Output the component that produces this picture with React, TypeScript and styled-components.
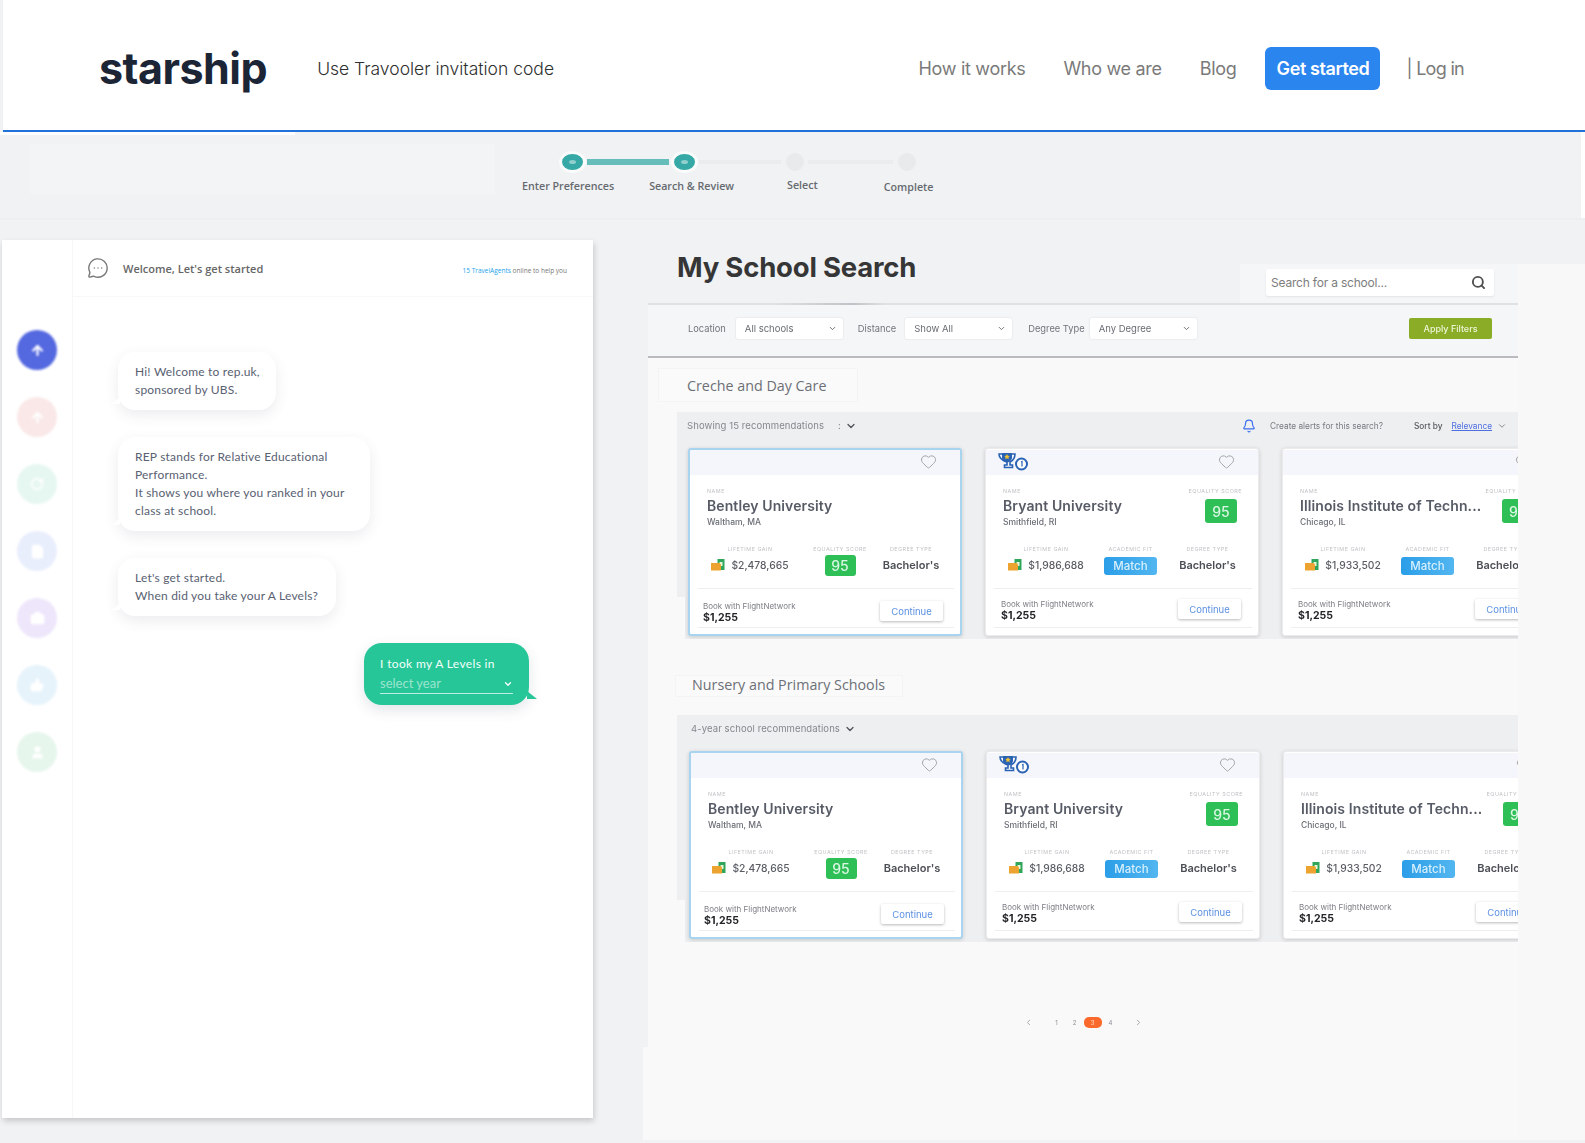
import React from 'react';
import styled, { createGlobalStyle } from 'styled-components';
import {
  ArrowUp,
  Bell,
  Briefcase,
  ChevronDown,
  ChevronLeft,
  ChevronRight,
  FileText,
  Heart,
  MessageCircleMore,
  RotateCw,
  Search,
  ThumbsUp,
  User,
} from 'lucide-react';

const GlobalStyle = createGlobalStyle`
  html, body {
    margin: 0;
    padding: 0;
    background: #ffffff;
    font-family: 'Inter', 'Liberation Sans', sans-serif;
  }
  * {
    box-sizing: border-box;
  }
`;

const Page = styled.div`
  width: 1585px;
  height: 1143px;
  display: flex;
  flex-direction: column;
  overflow: hidden;
  background: #f1f2f4;
`;

/* top navigation */
const Header = styled.header`
  height: 132px;
  flex: none;
  margin-left: 3px;
  padding: 6px 121px 0 96px;
  display: flex;
  align-items: center;
  background: #ffffff;
  border-bottom: 2px solid #2271d8;
`;

const Logo = styled.div`
  font-size: 43px;
  line-height: 48px;
  font-weight: 700;
  letter-spacing: -0.5px;
  color: #1c2536;
`;

const Tagline = styled.div`
  margin-left: 50px;
  font-size: 17.5px;
  font-weight: 300;
  color: #2f2f2f;
`;

const Nav = styled.nav`
  margin-left: auto;
  display: flex;
  align-items: center;
`;

const NavLink = styled.span`
  margin-left: 38px;
  font-size: 18px;
  letter-spacing: -0.3px;
  color: #7a7a7a;
  white-space: nowrap;
`;

const GetStarted = styled.button`
  width: 115px;
  height: 43px;
  margin-left: 29px;
  border: none;
  border-radius: 6px;
  background: #2a85ef;
  color: #ffffff;
  font-family: inherit;
  font-size: 18px;
  font-weight: 600;
  letter-spacing: -0.4px;
`;

const LogIn = styled(NavLink)`
  margin-left: 26px;
  letter-spacing: -0.7px;
`;

/* stepper */
const StepBar = styled.div`
  height: 88px;
  flex: none;
  padding-top: 19px;
  border-bottom: 2px solid #eeeff1;
  background:
    linear-gradient(#ffffff, #ffffff) left top / 295px 3px no-repeat,
    linear-gradient(#ffffff, #ffffff) right top / 4px 100% no-repeat,
    linear-gradient(#f3f4f6, #f3f4f6) 30px 12px / 465px 50px no-repeat;
`;

const StepTrack = styled.div`
  height: 22px;
  padding-left: 562px;
  display: flex;
  align-items: center;
`;

const StepDot = styled.div<{ $done?: boolean }>`
  flex: none;
  width: ${(p) => (p.$done ? '21px' : '18px')};
  height: ${(p) => (p.$done ? '16px' : '18px')};
  border-radius: 50%;
  background: ${(p) => (p.$done ? '#36a9a6' : '#e9eaec')};
  box-shadow: ${(p) => (p.$done ? '0 0 0 3px #fafbfb' : 'none')};
  filter: blur(0.5px);
  display: flex;
  align-items: center;
  justify-content: center;

  &::after {
    content: '';
    width: 7px;
    height: 4px;
    border-radius: 50%;
    background: ${(p) => (p.$done ? '#8fd0cd' : 'transparent')};
  }
`;

const StepLine = styled.div<{ $done?: boolean; $width: number }>`
  flex: none;
  width: ${(p) => p.$width}px;
  margin: 0 5px 0 4px;
  height: ${(p) => (p.$done ? '6px' : '4px')};
  background: ${(p) => (p.$done ? '#66bdb9' : '#ebecee')};
  filter: blur(0.5px);
`;

const StepLabels = styled.div`
  display: flex;
  align-items: flex-start;
  padding-left: 522px;
`;

const StepLabel = styled.span<{ $left: number; $top: number }>`
  margin-left: ${(p) => p.$left}px;
  margin-top: ${(p) => p.$top}px;
  font-family: 'Open Sans', 'Liberation Sans', sans-serif;
  font-size: 10.7px;
  line-height: 14px;
  font-weight: 600;
  color: #666a70;
  white-space: nowrap;
`;

/* body columns */
const Main = styled.div`
  flex: 1;
  min-height: 0;
  display: flex;
  padding-bottom: 3px;
`;

const LeftColumn = styled.div`
  flex: none;
  width: 648px;
  padding: 20px 0 0 2px;
`;

const ChatPanel = styled.section`
  width: 591px;
  height: 878px;
  display: flex;
  background: #ffffff;
  box-shadow: 1px 3px 6px rgba(0, 0, 0, 0.18);
`;

const Sidebar = styled.aside`
  flex: none;
  width: 71px;
  padding-top: 90px;
  display: flex;
  flex-direction: column;
  align-items: center;
  gap: 27px;
  border-right: 1px solid #f7f7f8;
`;

const SideStep = styled.div<{ $color: string }>`
  width: 40px;
  height: 40px;
  border-radius: 50%;
  background: ${(p) => p.$color};
  color: #ffffff;
  filter: blur(0.8px);
  display: flex;
  align-items: center;
  justify-content: center;
`;

const ChatBody = styled.div`
  flex: 1;
  display: flex;
  flex-direction: column;
`;

const ChatHeader = styled.div`
  height: 57px;
  flex: none;
  padding: 0 26px 0 14px;
  display: flex;
  align-items: center;
  gap: 14px;
  border-bottom: 1px solid #f8f8f9;
  color: #777777;
`;

const ChatTitle = styled.span`
  font-family: 'Open Sans', 'Liberation Sans', sans-serif;
  font-size: 11px;
  font-weight: 600;
  color: #666666;
`;

const OnlineNote = styled.span`
  margin-left: auto;
  margin-top: 4px;
  font-family: 'Open Sans', 'Liberation Sans', sans-serif;
  font-size: 6.5px;
  color: #777777;

  b {
    font-weight: 400;
    color: #1ca4ea;
  }
`;

const Messages = styled.div`
  padding: 55px 0 0 45px;
  display: flex;
  flex-direction: column;
  align-items: flex-start;
  gap: 27px;
`;

const Bubble = styled.div<{ $width: number }>`
  position: relative;
  width: ${(p) => p.$width}px;
  padding: 11px 0 11px 17px;
  border-radius: 17px;
  background: #ffffff;
  box-shadow: 0 5px 14px rgba(60, 70, 90, 0.1);
  font-family: 'Lato', 'Liberation Sans', sans-serif;
  font-size: 12px;
  line-height: 18px;
  letter-spacing: 0.2px;
  color: #596172;
  white-space: nowrap;

  &::after {
    content: '';
    position: absolute;
    left: -6px;
    bottom: 6px;
    border-left: 8px solid transparent;
    border-bottom: 7px solid #ffffff;
  }
`;

const ReplyBubble = styled.div`
  position: relative;
  width: 165px;
  height: 62px;
  margin-left: 246px;
  padding: 12px 16px 0;
  border-radius: 18px;
  background: #26c698;
  box-shadow: 0 5px 14px rgba(60, 70, 90, 0.14);
  font-family: 'Lato', 'Liberation Sans', sans-serif;
  font-size: 12px;
  line-height: 17px;
  letter-spacing: 0.35px;
  color: #f4fffb;

  &::after {
    content: '';
    position: absolute;
    right: -8px;
    bottom: 6px;
    border-right: 10px solid transparent;
    border-bottom: 8px solid #26c698;
  }
`;

const YearSelect = styled.div`
  height: 20px;
  margin-top: 2px;
  display: flex;
  align-items: center;
  justify-content: space-between;
  border-bottom: 1px solid rgba(255, 255, 255, 0.7);
  color: rgba(255, 255, 255, 0.55);
  font-size: 13px;
  letter-spacing: 0;
`;

const RightColumn = styled.div`
  flex: 1;
  min-width: 0;
  display: flex;
`;

const SearchColumn = styled.section`
  flex: none;
  width: 870px;
  display: flex;
  flex-direction: column;
`;

const Gutter = styled.div`
  flex: 1;
  margin-top: 44px;
  background: #f8f8f9;
`;

const TitleRow = styled.div`
  position: relative;
  height: 85px;
  flex: none;
  padding-left: 29px;
  display: flex;
  align-items: flex-end;
  justify-content: space-between;
  border-bottom: 2px solid #dfe1e4;

  &::after {
    content: '';
    position: absolute;
    left: 127px;
    bottom: -2px;
    width: 110px;
    height: 2px;
    background: linear-gradient(90deg, #dfe1e4, #bfc2c6 70%, #dfe1e4);
  }
`;

const PageTitle = styled.h1`
  margin: 0 0 19px;
  font-size: 27.5px;
  line-height: 34px;
  font-weight: 700;
  letter-spacing: -0.2px;
  color: #363636;
`;

const SearchDock = styled.div`
  width: 278px;
  height: 39px;
  padding: 5px 24px 7px 26px;
  background: #f5f6f8;
`;

const SearchBox = styled.div`
  height: 27px;
  padding: 0 8px 0 5px;
  display: flex;
  align-items: center;
  justify-content: space-between;
  border-radius: 2px;
  background: #ffffff;
  box-shadow: 0 1px 2px rgba(0, 0, 0, 0.08);
  font-size: 12px;
  letter-spacing: -0.2px;
  color: #7d7d7d;
`;

const FilterRow = styled.div`
  height: 53px;
  flex: none;
  padding: 0 26px 4px 40px;
  display: flex;
  align-items: center;
  background: #f5f6f8;
  border-bottom: 2px solid #b9bbbe;
  filter: blur(0.3px);
`;

const FilterLabel = styled.span<{ $gap?: number }>`
  margin-left: ${(p) => p.$gap ?? 0}px;
  font-size: 9.3px;
  color: #70747a;
  white-space: nowrap;
`;

const FilterSelect = styled.div<{ $gap: number }>`
  width: 107px;
  height: 21px;
  margin-left: ${(p) => p.$gap}px;
  padding: 0 6px 0 9px;
  display: flex;
  align-items: center;
  justify-content: space-between;
  border-radius: 2px;
  background: #ffffff;
  box-shadow: 0 0 2px rgba(0, 0, 0, 0.14);
  font-size: 9.5px;
  color: #696d73;
`;

const ApplyButton = styled.button`
  width: 83px;
  height: 21px;
  margin-left: auto;
  border: none;
  border-radius: 2px;
  background: #8aac26;
  color: #eef5d6;
  font-family: inherit;
  font-size: 9px;
  font-weight: 500;
`;

const Results = styled.div`
  flex: 1;
  min-height: 0;
  display: flex;
  flex-direction: column;
  background: #f9f9fa;
`;

const SectionTitle = styled.h2<{ $left: number; $pad: number; $top: number; $height: number; $width: number; $lift: number }>`
  width: ${(p) => p.$width}px;
  height: ${(p) => p.$height}px;
  margin: ${(p) => p.$top}px 0 0 ${(p) => p.$left}px;
  padding: 0 0 ${(p) => p.$lift}px ${(p) => p.$pad}px;
  display: flex;
  align-items: center;
  background: #fafafb;
  border: 1px solid #f4f4f6;
  font-family: 'Open Sans', 'Liberation Sans', sans-serif;
  font-size: 14.3px;
  font-weight: 400;
  color: #6d7076;
  white-space: nowrap;
`;

const RecBlock = styled.div<{ $top: number }>`
  margin: ${(p) => p.$top}px 0 0 29px;
  background: linear-gradient(#eeeff1, #eeeff1) left top / 8px 185px no-repeat;
  filter: blur(0.45px);
`;

const SortBand = styled.div`
  height: 27px;
  padding: 0 11px 0 10px;
  display: flex;
  align-items: center;
  background: #eeeff1;
  font-size: 9.5px;
  color: #84878d;
`;

const BandCount = styled.span<{ $pad: number }>`
  padding-left: ${(p) => p.$pad}px;
  white-space: nowrap;
  letter-spacing: 0.1px;
`;

const BandChevron = styled.span`
  margin-left: 4px;
  display: flex;
  color: #4d5157;
`;

const AlertGroup = styled.div`
  margin-left: auto;
  display: flex;
  align-items: center;
  color: #777a80;
  font-size: 8.3px;
`;

const AlertText = styled.span`
  margin: 0 31px 0 14px;
  white-space: nowrap;
`;

const SortLabel = styled.span`
  color: #55585e;
  font-weight: 500;
  white-space: nowrap;
`;

const SortValue = styled.span`
  margin: 0 5px 0 9px;
  color: #4e6fe0;
  text-decoration: underline;
  white-space: nowrap;
`;

const CardWell = styled.div<{ $pad: number }>`
  margin-left: 8px;
  padding: 9px 0 3px ${(p) => p.$pad}px;
  display: flex;
  gap: 23px;
  overflow: hidden;
  background: #eeeff1;
`;

const Card = styled.article<{ $featured?: boolean }>`
  flex: none;
  width: 274px;
  height: 188px;
  padding-top: ${(p) => (p.$featured ? '0' : '1px')};
  border: ${(p) => (p.$featured ? '2px solid #a9d4f0' : '1px solid #ebebeb')};
  border-radius: 3px;
  background: #ffffff;
  box-shadow: 0 1px 4px rgba(0, 0, 0, 0.16);
  display: flex;
  flex-direction: column;
`;

const CardHead = styled.div`
  height: 25px;
  flex: none;
  padding: 0 23px 3px 12px;
  display: flex;
  align-items: center;
  justify-content: space-between;
  background: #f4f6fb;
  color: #9a9a9a;
`;

const CardTop = styled.div`
  height: 41px;
  flex: none;
  margin-top: 12px;
  padding: 0 16px 0 17px;
  display: flex;
  justify-content: space-between;
`;

const TinyLabel = styled.div`
  font-size: 5.4px;
  line-height: 8px;
  letter-spacing: 0.5px;
  color: #c0c2c5;
  text-transform: uppercase;
  white-space: nowrap;
`;

const SchoolName = styled.div`
  margin-top: 2px;
  font-size: 14px;
  line-height: 18px;
  font-weight: 600;
  letter-spacing: 0.1px;
  color: #575b66;
  white-space: nowrap;
`;

const SchoolPlace = styled.div`
  margin-top: 1px;
  font-size: 8.5px;
  line-height: 12px;
  font-weight: 500;
  color: #696d74;
`;

const ScoreColumn = styled.div`
  display: flex;
  flex-direction: column;
  align-items: flex-end;
  gap: 4px;
`;

const ScoreBadge = styled.div<{ $size: 'sm' | 'lg' }>`
  width: ${(p) => (p.$size === 'lg' ? '32px' : '31px')};
  height: ${(p) => (p.$size === 'lg' ? '24px' : '21px')};
  margin: ${(p) => (p.$size === 'lg' ? '0 5px 0 0' : '1px 0 0')};
  display: flex;
  align-items: center;
  justify-content: center;
  border-radius: 3px;
  background: #2fbf57;
  color: #d9f7e2;
  font-size: 14px;
  font-weight: 500;
`;

const MetricGrid = styled.div<{ $cols: string }>`
  margin-top: 17px;
  padding-left: 16px;
  display: grid;
  grid-template-columns: ${(p) => p.$cols};
`;

const Metric = styled.div`
  display: flex;
  flex-direction: column;
  align-items: center;
`;

const MetricValue = styled.div`
  height: 24px;
  display: flex;
  align-items: center;
  gap: 6px;
  font-size: 10.3px;
  font-weight: 500;
  color: #595c63;
  white-space: nowrap;
`;

const DegreeValue = styled(MetricValue)`
  font-size: 11px;
  font-weight: 600;
  color: #4c4f55;
`;

const MatchBadge = styled.div`
  width: 53px;
  height: 18px;
  margin-top: 2px;
  display: flex;
  align-items: center;
  justify-content: center;
  border-radius: 3px;
  background: linear-gradient(90deg, #2b9ee8, #52b6f0);
  color: #d8f0fd;
  font-size: 11.5px;
`;

const CardDivider = styled.div<{ $top?: number }>`
  height: 1px;
  flex: none;
  margin: ${(p) => p.$top ?? 0}px 6px 0 8px;
  background: #eeeeef;
`;

const CardFooter = styled.div<{ $featured?: boolean }>`
  height: 38px;
  flex: none;
  padding: ${(p) => (p.$featured ? '12px 17px 0 13px' : '10px 17px 0 15px')};
  display: flex;
  justify-content: space-between;
`;

const BookText = styled.div`
  font-size: 8px;
  line-height: 11px;
  color: #7b7e84;
  white-space: nowrap;
`;

const Price = styled.div`
  font-size: 10.5px;
  line-height: 12px;
  font-weight: 700;
  color: #222428;
`;

const ContinueButton = styled.button`
  width: 63px;
  height: 20px;
  flex: none;
  border: none;
  border-radius: 2px;
  background: #ffffff;
  box-shadow: 0 1px 3px rgba(0, 0, 0, 0.28);
  color: #5b90e2;
  font-family: inherit;
  font-size: 9.5px;
`;

const Pagination = styled.div`
  margin-top: 71px;
  padding-left: 1px;
  display: flex;
  align-items: center;
  justify-content: center;
  height: 18px;
  filter: blur(0.3px);
`;

const PageNumber = styled.span<{ $active?: boolean }>`
  width: 18px;
  height: 11px;
  display: flex;
  align-items: center;
  justify-content: center;
  border-radius: 5px;
  background: ${(p) => (p.$active ? '#fb6a2c' : 'transparent')};
  color: ${(p) => (p.$active ? '#ffd9c6' : '#8d8f94')};
  font-size: 6px;
`;

const PageArrow = styled.span<{ $side: 'left' | 'right' }>`
  width: 18px;
  display: flex;
  justify-content: center;
  color: #8d8f94;
  margin-${(p) => (p.$side === 'left' ? 'right' : 'left')}: 10px;
`;

const BottomFill = styled.div`
  flex: 1;
  margin: 16px 0 0 -5px;
  background: #f9f9fa;
`;

const TrophyIcon = () => (
  <svg width="30" height="19" viewBox="0 0 30 19">
    <path d="M1 2h16c0 5-3 7-5 8v3h2.500v2.500h-8V13H9v-3C6 9 1 7 1 2z" fill="none" stroke="#2a63b4" strokeWidth="1.6" />
    <path d="M4 1h10v4.500c0 2.500-2 4.800-5 4.800s-5-2.300-5-4.800z" fill="#2a63b4" />
    <path d="M9 2l.9 1.800 1.900.2-1.400 1.300.4 1.900-1.800-1-1.800 1 .4-1.900L6.200 4l1.900-.2z" fill="#f1c232" />
    <circle cx="23.500" cy="12" r="5.500" fill="#ffffff" stroke="#2a63b4" strokeWidth="2" />
    <path d="M23 10l1-.5v5" fill="none" stroke="#2a63b4" strokeWidth="1.200" />
  </svg>
);

const WalletIcon = () => (
  <svg width="14" height="12" viewBox="0 0 14 12">
    <rect x="6.500" y="0" width="7" height="11" fill="#2fa65a" />
    <rect x="8.500" y="3" width="3" height="4" fill="#e8f5d8" />
    <path d="M0 4h8.500l1.500 1.500V11.500H0z" fill="#eda32f" />
  </svg>
);

type School = {
  name: string;
  place: string;
  gain: string;
  score?: boolean;
  trophy?: boolean;
  featured?: boolean;
};

const schools: School[] = [
  { name: 'Bentley University', place: 'Waltham, MA', gain: '$2,478,665', featured: true },
  { name: 'Bryant University', place: 'Smithfield, RI', gain: '$1,986,688', score: true, trophy: true },
  { name: 'Illinois Institute of Techn...', place: 'Chicago, IL', gain: '$1,933,502', score: true },
];

const SchoolCard = ({ school }: { school: School }) => (
  <Card $featured={school.featured}>
    <CardHead>
      {school.trophy ? <TrophyIcon /> : <span />}
      <Heart size={17} strokeWidth={1.2} />
    </CardHead>
    <CardTop>
      <div>
        <TinyLabel>Name</TinyLabel>
        <SchoolName>{school.name}</SchoolName>
        <SchoolPlace>{school.place}</SchoolPlace>
      </div>
      {school.score && (
        <ScoreColumn>
          <TinyLabel>Equality score</TinyLabel>
          <ScoreBadge $size="lg">{school.name.startsWith('Illinois') ? '94' : '95'}</ScoreBadge>
        </ScoreColumn>
      )}
    </CardTop>
    <MetricGrid $cols={school.featured ? '88px 92px 50px' : '88px 81px 73px'}>
      <Metric>
        <TinyLabel>Lifetime gain</TinyLabel>
        <MetricValue>
          <WalletIcon />
          {school.gain}
        </MetricValue>
      </Metric>
      <Metric>
        <TinyLabel>{school.featured ? 'Equality score' : 'Academic fit'}</TinyLabel>
        <MetricValue>
          {school.featured ? <ScoreBadge $size="sm">95</ScoreBadge> : <MatchBadge>Match</MatchBadge>}
        </MetricValue>
      </Metric>
      <Metric>
        <TinyLabel>Degree type</TinyLabel>
        <DegreeValue>Bachelor's</DegreeValue>
      </Metric>
    </MetricGrid>
    <CardDivider $top={11} />
    <CardFooter $featured={school.featured}>
      <div>
        <BookText>Book with FlightNetwork</BookText>
        <Price>$1,255</Price>
      </div>
      <ContinueButton>Continue</ContinueButton>
    </CardFooter>
    <CardDivider />
  </Card>
);

const sideSteps = [
  { color: '#5468e0', icon: <ArrowUp size={15} strokeWidth={3.5} /> },
  { color: '#fae8e8', icon: <ArrowUp size={15} strokeWidth={3.5} /> },
  { color: '#e6f7f2', icon: <RotateCw size={14} strokeWidth={3} /> },
  { color: '#e9eefd', icon: <FileText size={15} fill="#ffffff" /> },
  { color: '#eee6fb', icon: <Briefcase size={15} fill="#ffffff" /> },
  { color: '#e6f3fb', icon: <ThumbsUp size={14} fill="#ffffff" /> },
  { color: '#e6f6ec', icon: <User size={15} fill="#ffffff" /> },
];

const App = () => (
  <>
    <GlobalStyle />
    <Page>
      <Header>
        <Logo>starship</Logo>
        <Tagline>Use Travooler invitation code</Tagline>
        <Nav>
          <NavLink>How it works</NavLink>
          <NavLink>Who we are</NavLink>
          <NavLink>Blog</NavLink>
          <GetStarted>Get started</GetStarted>
          <LogIn>| Log in</LogIn>
        </Nav>
      </Header>

      <StepBar>
        <StepTrack>
          <StepDot $done />
          <StepLine $done $width={82} />
          <StepDot $done />
          <StepLine $width={82} />
          <StepDot />
          <StepLine $width={85} />
          <StepDot />
        </StepTrack>
        <StepLabels>
          <StepLabel $left={0} $top={6}>Enter Preferences</StepLabel>
          <StepLabel $left={35} $top={6}>Search &amp; Review</StepLabel>
          <StepLabel $left={53} $top={5}>Select</StepLabel>
          <StepLabel $left={66} $top={7}>Complete</StepLabel>
        </StepLabels>
      </StepBar>

      <Main>
        <LeftColumn>
          <ChatPanel>
            <Sidebar>
              {sideSteps.map((step, i) => (
                <SideStep key={i} $color={step.color}>{step.icon}</SideStep>
              ))}
            </Sidebar>
            <ChatBody>
              <ChatHeader>
                <MessageCircleMore size={22} strokeWidth={1.5} />
                <ChatTitle>Welcome, Let's get started</ChatTitle>
                <OnlineNote><b>15 TravelAgents</b> online to help you</OnlineNote>
              </ChatHeader>
              <Messages>
                <Bubble $width={158}>Hi! Welcome to rep.uk,<br />sponsored by UBS.</Bubble>
                <Bubble $width={252}>
                  REP stands for Relative Educational<br />
                  Performance.<br />
                  It shows you where you ranked in your<br />
                  class at school.
                </Bubble>
                <Bubble $width={218}>Let's get started.<br />When did you take your A Levels?</Bubble>
                <ReplyBubble>
                  I took my A Levels in
                  <YearSelect>
                    select year
                    <ChevronDown size={10} strokeWidth={3} color="#ffffff" />
                  </YearSelect>
                </ReplyBubble>
              </Messages>
            </ChatBody>
          </ChatPanel>
        </LeftColumn>

        <RightColumn>
          <SearchColumn>
            <TitleRow>
              <PageTitle>My School Search</PageTitle>
              <SearchDock>
                <SearchBox>
                  Search for a school...
                  <Search size={15} strokeWidth={3} color="#4f4f4f" />
                </SearchBox>
              </SearchDock>
            </TitleRow>

            <FilterRow>
              <FilterLabel>Location</FilterLabel>
              <FilterSelect $gap={10}>All schools<ChevronDown size={9} strokeWidth={2.5} /></FilterSelect>
              <FilterLabel $gap={15}>Distance</FilterLabel>
              <FilterSelect $gap={9}>Show All<ChevronDown size={9} strokeWidth={2.5} /></FilterSelect>
              <FilterLabel $gap={16}>Degree Type</FilterLabel>
              <FilterSelect $gap={5}>Any Degree<ChevronDown size={9} strokeWidth={2.5} /></FilterSelect>
              <ApplyButton>Apply Filters</ApplyButton>
            </FilterRow>

            <Results>
              <SectionTitle $left={10} $pad={28} $top={10} $height={34} $width={200} $lift={0}>Creche and Day Care</SectionTitle>
              <RecBlock $top={10}>
                <SortBand>
                  <BandCount $pad={0}>Showing 15 recommendations</BandCount>
                  <BandCount $pad={14}>:</BandCount>
                  <BandChevron><ChevronDown size={12} strokeWidth={2.5} /></BandChevron>
                  <AlertGroup>
                    <Bell size={14} color="#3d6ff0" />
                    <AlertText>Create alerts for this search?</AlertText>
                    <SortLabel>Sort by</SortLabel>
                    <SortValue>Relevance</SortValue>
                    <ChevronDown size={10} />
                  </AlertGroup>
                </SortBand>
                <CardWell $pad={3}>
                  {schools.map((s) => <SchoolCard key={s.name} school={s} />)}
                </CardWell>
              </RecBlock>

              <SectionTitle $left={27} $pad={16} $top={36} $height={22} $width={228} $lift={3}>Nursery and Primary Schools</SectionTitle>
              <RecBlock $top={18}>
                <SortBand>
                  <BandCount $pad={4}>4-year school recommendations</BandCount>
                  <BandChevron><ChevronDown size={12} strokeWidth={2.5} /></BandChevron>
                </SortBand>
                <CardWell $pad={4}>
                  {schools.map((s) => <SchoolCard key={s.name} school={s} />)}
                </CardWell>
              </RecBlock>

              <Pagination>
                <PageArrow $side="left"><ChevronLeft size={9} strokeWidth={2} /></PageArrow>
                <PageNumber>1</PageNumber>
                <PageNumber>2</PageNumber>
                <PageNumber $active>3</PageNumber>
                <PageNumber>4</PageNumber>
                <PageArrow $side="right"><ChevronRight size={9} strokeWidth={2} /></PageArrow>
              </Pagination>
              <BottomFill />
            </Results>
          </SearchColumn>
          <Gutter />
        </RightColumn>
      </Main>
    </Page>
  </>
);

export default App;
